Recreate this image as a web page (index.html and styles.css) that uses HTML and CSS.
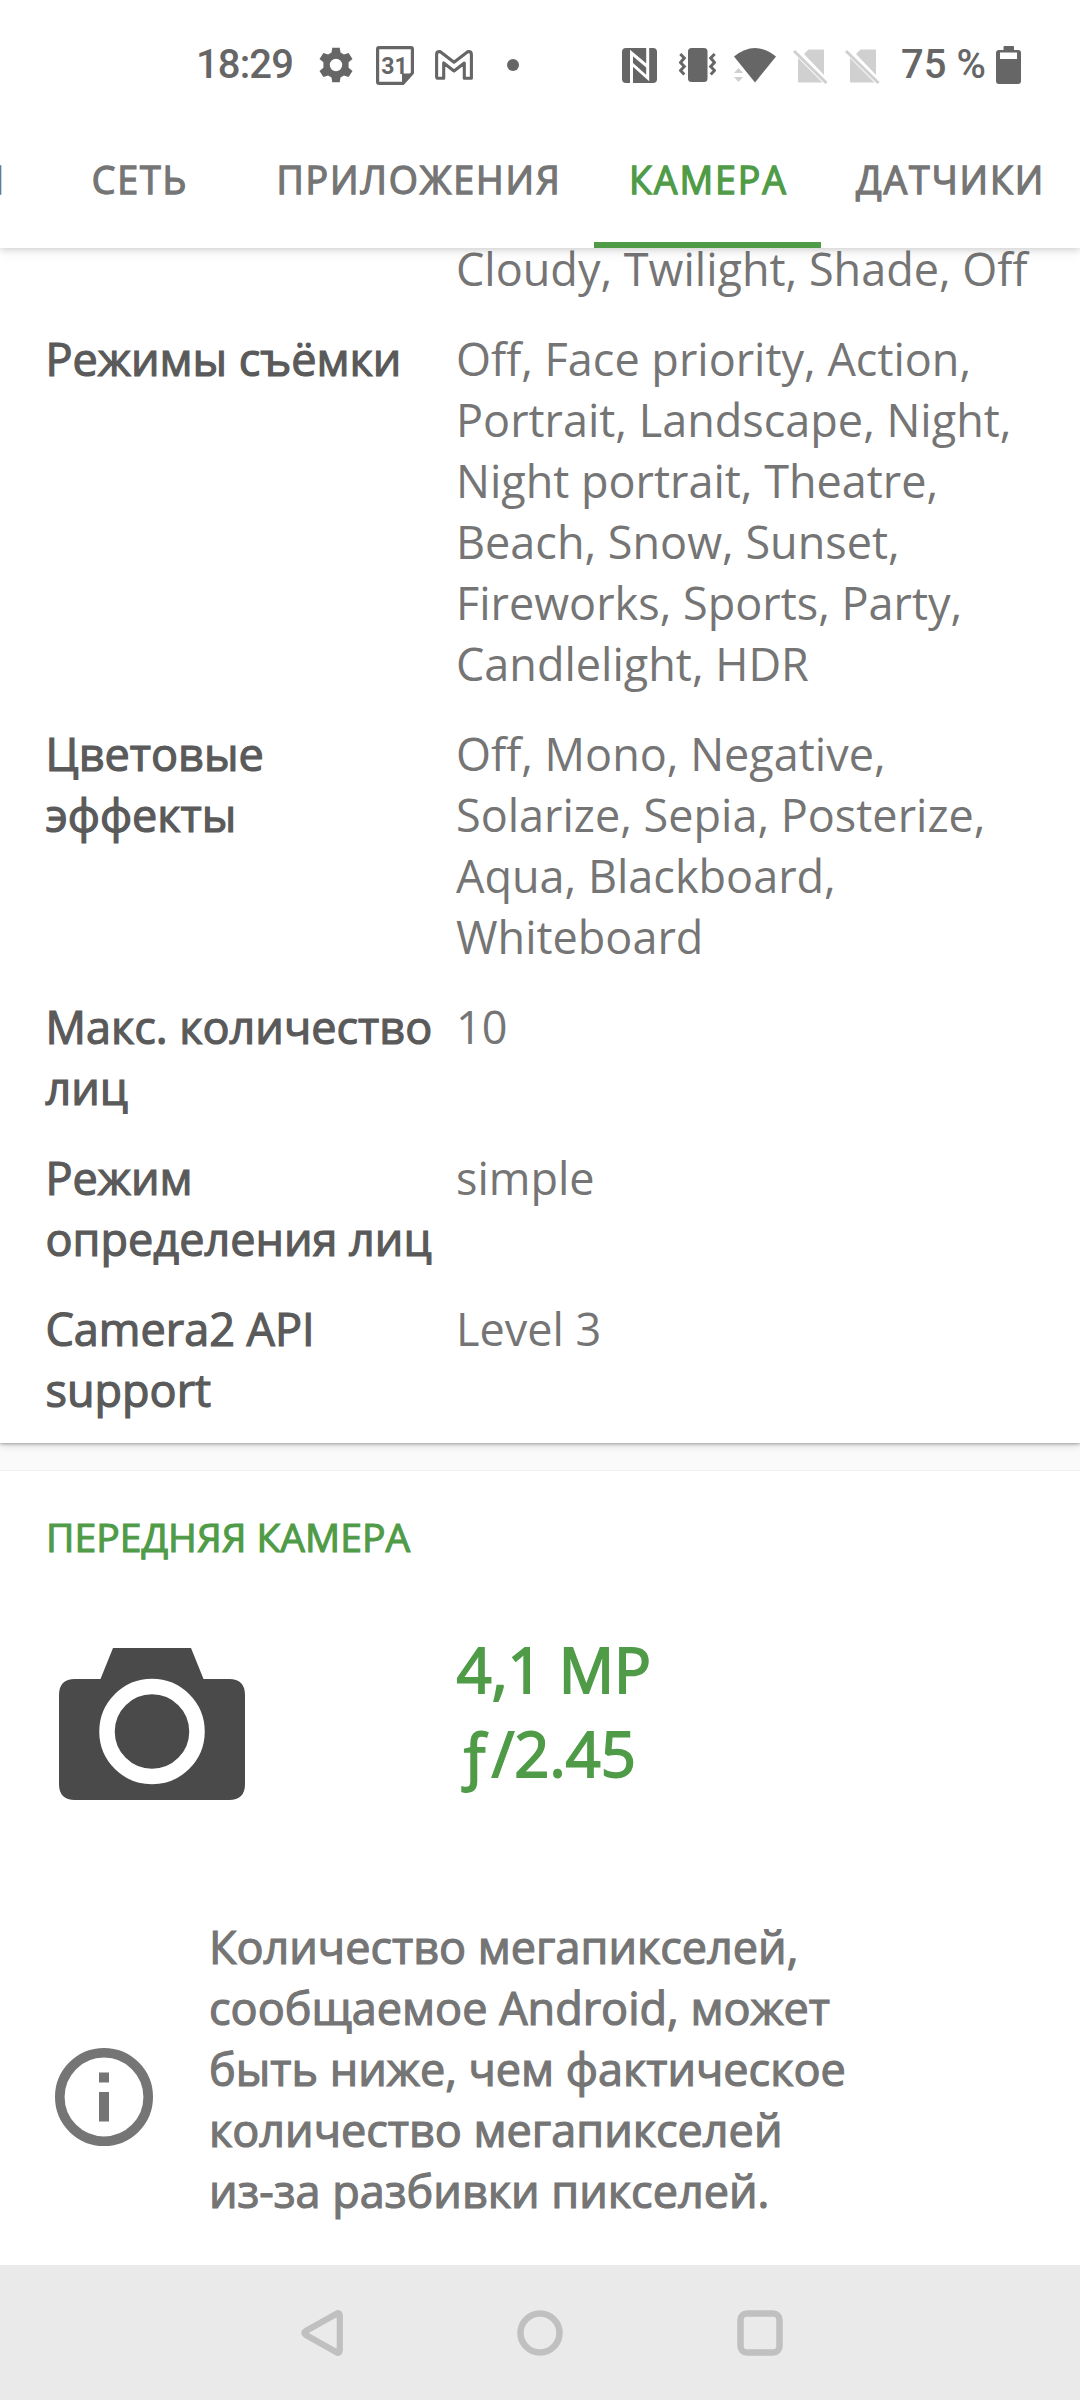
FILE: index.html
```html
<!DOCTYPE html>
<html lang="ru">
<head>
<meta charset="utf-8">
<title>Камера</title>
<link rel="stylesheet" href="styles.css">
</head>
<body>
<div class="screen">
  <header class="top">
    <div class="status">
      <div class="status-left">
        <span class="clock">18:29</span>
        <svg class="gear" width="36" height="36" viewBox="0 0 36 36"><path fill="#666" fill-rule="evenodd" d="M14.300 .8H21.700L22.500 5.600L25.900 7.600L30.600 5.900L34.500 12.100L30.600 15.300V20.700L34.500 23.900L30.600 30.100L25.900 28.400L22.500 30.400L21.700 35.200H14.300L13.500 30.400L10.100 28.400L5.400 30.100L1.500 23.900L5.400 20.700V15.300L1.500 12.100L5.400 5.900L10.100 7.600L13.500 5.600ZM18 11.800A6.200 6.200 0 1 0 18 24.200A6.200 6.200 0 1 0 18 11.800Z"/></svg>
        <svg class="calendar" width="38" height="39" viewBox="0 0 38 39"><path fill="none" stroke="#666" stroke-width="3.200" stroke-linejoin="round" d="M3 1.600H35Q36.400 1.600 36.400 3V27L27 37.400H3Q1.600 37.400 1.600 36V3Q1.600 1.600 3 1.600Z"/><path fill="#666" d="M26 38V27.500H37Z"/><text class="day" x="18.500" y="27.500" text-anchor="middle">31</text></svg>
        <svg class="gmail" width="38" height="30" viewBox="0 0 38 30"><path fill="none" stroke="#666" stroke-width="3.100" stroke-linejoin="round" d="M1.600 26.500V4.500Q1.600 1.600 4.500 1.600H5L19 12.200L33 1.600H33.500Q36.400 1.600 36.400 4.500V28.300H29.300V13L19 21L8.700 13V28.300H3Q1.600 28.300 1.600 26.500Z"/></svg>
        <svg class="dot" width="12" height="12" viewBox="0 0 12 12"><circle cx="6" cy="6" r="6" fill="#666"/></svg>
      </div>
      <div class="status-right">
        <svg class="nfc" width="35" height="35" viewBox="0 0 35 35"><rect width="35" height="35" rx="4" fill="#666"/><path d="M9.500 35V5L25.500 18.500M25.700 0V30L10 16" fill="none" stroke="#fff" stroke-width="3"/></svg>
        <svg class="vibrate" width="37" height="34" viewBox="0 0 37 34"><rect x="9" width="19.500" height="34" rx="3.500" fill="#666"/><path d="M1.300 5.500L5.300 9.500L1.500 14L5.300 18L1.500 22L5.300 26M35.700 5.500L31.700 9.500L35.500 14L31.700 18L35.500 22L31.700 26" transform="translate(0 .5)" fill="none" stroke="#666" stroke-width="3"/></svg>
        <svg class="wifi" width="42" height="35" viewBox="0 0 42 35"><path fill="#666" d="M0 8.500Q21-8.500 42 8.500L21 34.500Z"/><path fill="#d0d0d0" d="M0 25L4.500 20L9 25ZM0 29H9L4.500 34Z"/></svg>
        <svg class="sim" width="35" height="35" viewBox="0 0 35 35"><path fill="#d0d0d0" d="M11 5L15.500 .5H30Q31 .5 31 1.500V26ZM5 9L29.500 33.500H6Q5 33.500 5 32.500Z"/><path d="M1 2L33.500 34" stroke="#d0d0d0" stroke-width="3"/></svg>
        <svg class="sim" width="35" height="35" viewBox="0 0 35 35"><path fill="#d0d0d0" d="M11 5L15.500 .5H30Q31 .5 31 1.500V26ZM5 9L29.500 33.500H6Q5 33.500 5 32.500Z"/><path d="M1 2L33.500 34" stroke="#d0d0d0" stroke-width="3"/></svg>
        <span class="percent">75 %</span>
        <svg class="battery" width="25" height="38" viewBox="0 0 25 38"><path fill="#666" fill-rule="evenodd" d="M7.500 4V1Q7.500 0 8.500 0H17Q18 0 18 1V4H22Q25 4 25 7V35Q25 38 22 38H3Q0 38 0 35V7Q0 4 3 4ZM4 6.500V13H21V6.500Z"/></svg>
      </div>
    </div>
    <nav class="tabs">
      <div class="tab tab-cut"><span>Я</span></div>
      <div class="tab tab-net"><span>СЕТЬ</span></div>
      <div class="tab tab-apps"><span>ПРИЛОЖЕНИЯ</span></div>
      <div class="tab tab-camera active"><span>КАМЕРА</span></div>
      <div class="tab tab-sensors"><span>ДАТЧИКИ</span></div>
    </nav>
  </header>

  <main class="content">
    <section class="card specs">
      <div class="row"><div class="label"></div><div class="value">Cloudy, Twilight, Shade, Off</div></div>
      <div class="row"><div class="label">Режимы съёмки</div><div class="value">Off, Face priority, Action,<br>Portrait, Landscape, Night,<br>Night portrait, Theatre,<br>Beach, Snow, Sunset,<br>Fireworks, Sports, Party,<br>Candlelight, HDR</div></div>
      <div class="row"><div class="label">Цветовые<br>эффекты</div><div class="value">Off, Mono, Negative,<br>Solarize, Sepia, Posterize,<br>Aqua, Blackboard,<br>Whiteboard</div></div>
      <div class="row"><div class="label">Макс. количество<br>лиц</div><div class="value">10</div></div>
      <div class="row"><div class="label">Режим<br>определения лиц</div><div class="value">simple</div></div>
      <div class="row"><div class="label">Camera2 API<br>support</div><div class="value">Level 3</div></div>
    </section>

    <section class="card front">
      <h2 class="title">ПЕРЕДНЯЯ КАМЕРА</h2>
      <div class="summary">
        <svg class="camera" width="186" height="152" viewBox="0 0 186 152"><path fill="#4a4a4a" d="M54 0H132L144.500 31H170Q186 31 186 47V136Q186 152 170 152H16Q0 152 0 136V47Q0 31 16 31H41.500Z"/><circle cx="93" cy="83.500" r="45" fill="none" stroke="#fff" stroke-width="15.500"/></svg>
        <div class="figures"><div>4,1 MP</div><div>ƒ/2.45</div></div>
      </div>
      <div class="note">
        <svg class="info" width="98" height="98" viewBox="0 0 98 98"><circle cx="49" cy="49" r="44.200" fill="none" stroke="#757575" stroke-width="9.600"/><path fill="#757575" d="M44 24.500H54V34.500H44ZM44 44H54V73.500H44Z"/></svg>
        <p class="note-text">Количество мегапикселей,<br>сообщаемое Android, может<br>быть ниже, чем фактическое<br>количество мегапикселей<br>из-за разбивки пикселей.</p>
      </div>
    </section>
  </main>

  <footer class="navbar">
    <svg width="42" height="46" viewBox="0 0 42 46"><path d="M36.500 3.200L4.800 21Q2 23 4.800 25L36.500 42.800Q38.800 43 38.800 40V6Q38.800 3 36.500 3.200Z" fill="none" stroke="#c0c0c0" stroke-width="6.200" stroke-linejoin="round"/></svg>
    <svg class="home" width="46" height="46" viewBox="0 0 46 46"><circle cx="23" cy="23" r="19.500" fill="none" stroke="#c0c0c0" stroke-width="6.500"/></svg>
    <svg class="recents" width="46" height="46" viewBox="0 0 46 46"><rect x="3.500" y="3.500" width="39" height="39" rx="6.500" fill="none" stroke="#c0c0c0" stroke-width="6.500"/></svg>
  </footer>
</div>
</body>
</html>
```
FILE: styles.css
```css
* { box-sizing: border-box; }

body {
  margin: 0;
  background: #fafafa;
  font-family: "Open Sans", "Noto Sans", sans-serif;
}

svg { display: block; flex: none; }

.screen {
  display: flex;
  flex-direction: column;
  width: 1080px;
  height: 2400px;
  overflow: hidden;
}

.top {
  position: relative;
  z-index: 1;
  flex: none;
  height: 248px;
  background: #fff;
  box-shadow: 0 2px 6px rgba(0, 0, 0, .14), 0 5px 14px rgba(0, 0, 0, .05);
}

.status {
  display: flex;
  justify-content: space-between;
  height: 130px;
  padding: 0 59px 0 196px;
  font-family: Roboto, sans-serif;
  font-size: 40px;
  font-weight: 500;
  line-height: 130px;
  color: #666;
}

.status-left, .status-right {
  display: flex;
  align-items: center;
  white-space: nowrap;
}

.clock { width: 122px; letter-spacing: -.9px; }
.calendar { margin-left: 22px; }
.day { font: 700 23px Roboto, sans-serif; fill: #666; }
.gmail { margin-left: 21px; }
.dot { margin-left: 34px; }
.vibrate { margin-left: 22px; }
.wifi { margin-left: 18px; }
.sim { margin: 3px 0 0 17px; }
.percent { width: 95px; margin-left: 21px; }

.tabs {
  display: flex;
  height: 118px;
}

.tab {
  display: flex;
  flex: none;
  justify-content: center;
  height: 118px;
  padding: 24px 0 0 2px;
  font-size: 37.5px;
  line-height: 52px;
  letter-spacing: 1.9px;
  color: #757575;
  -webkit-text-stroke: 1.3px;
  white-space: nowrap;
}

.tab-cut { width: 36px; justify-content: flex-end; padding-right: 30px; }
.tab-net { width: 206px; }
.tab-apps { width: 352px; }
.tab-camera { width: 227px; }
.tab-sensors { width: 257px; }

.active {
  color: #4f9b47;
  border-bottom: 6px solid #4f9b47;
}

.content {
  display: flex;
  flex-direction: column;
  flex: 1;
  gap: 28px;
  min-height: 0;
}

.card {
  flex: none;
  background: #fff;
}

.specs {
  display: grid;
  gap: 29px;
  margin-top: -10px;
  padding: 0 40px 23px 45.500px;
  box-shadow: 0 1px 3px rgba(0, 0, 0, .3), 0 3px 8px rgba(0, 0, 0, .12);
}

.row {
  display: grid;
  grid-template-columns: 410.500px 1fr;
  font-size: 45px;
  line-height: 61px;
  white-space: nowrap;
}

.label {
  color: #5a5a5a;
  -webkit-text-stroke: 1.2px;
}

.value { color: #757575; }

.front {
  height: 794px;
  padding: 38px 46px 0;
  box-shadow: 0 0 1px rgba(0, 0, 0, .2);
}

.title {
  margin: 0;
  font-size: 39.1px;
  font-weight: 400;
  line-height: 56px;
  color: #4f9b47;
  -webkit-text-stroke: 1.1px;
}

.summary {
  display: flex;
  align-items: flex-start;
  margin-top: 62px;
}

.camera { margin: 21px 211.500px 0 13px; }

.figures {
  font-size: 61.500px;
  line-height: 84px;
  color: #4f9b47;
  -webkit-text-stroke: 1.8px;
}

.note {
  display: flex;
  align-items: flex-start;
  margin-top: 116px;
}

.info { margin: 132px 56px 0 9px; }

.note-text {
  margin: 0;
  font-size: 45px;
  line-height: 61px;
  color: #757575;
  -webkit-text-stroke: 1.2px;
  white-space: nowrap;
}

.navbar {
  display: flex;
  flex: none;
  align-items: center;
  height: 135px;
  padding-left: 301px;
  background: #eaeaea;
}

.home { margin-left: 174px; }
.recents { margin-left: 174px; }
```
